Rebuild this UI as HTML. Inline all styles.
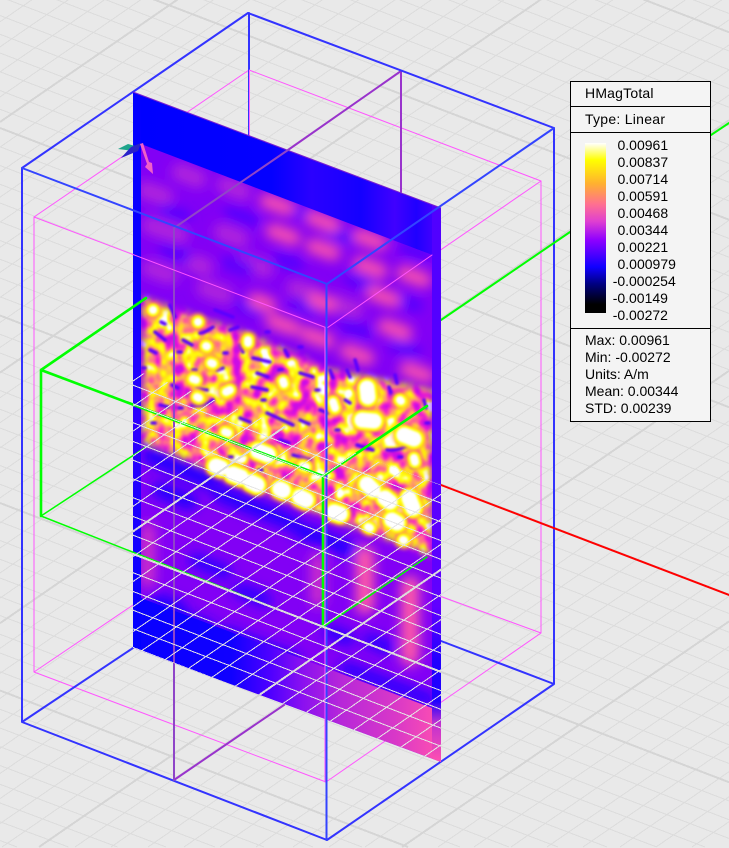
<!DOCTYPE html>
<html><head><meta charset="utf-8"><title>HMagTotal</title>
<style>
html,body{margin:0;padding:0;background:#e9e9e9;width:729px;height:848px;overflow:hidden;}
svg{display:block;overflow:hidden;}
text{font-family:"Liberation Sans",Arial,sans-serif;font-size:14px;fill:#000;}
</style></head><body>
<svg xmlns="http://www.w3.org/2000/svg" xmlns:xlink="http://www.w3.org/1999/xlink" width="729" height="848" viewBox="0 0 729 848">
<defs>
<path id="ga" d="M0 -265.75l729 279.2M0 -228.25l729 279.2M0 -209.5l729 279.2M0 -190.75l729 279.2M0 -172l729 279.2M0 -153.25l729 279.2M0 -134.5l729 279.2M0 -115.75l729 279.2M0 -97l729 279.2M0 -78.25l729 279.2M0 -40.75l729 279.2M0 -22l729 279.2M0 -3.25l729 279.2M0 15.5l729 279.2M0 34.25l729 279.2M0 53l729 279.2M0 71.75l729 279.2M0 90.5l729 279.2M0 109.25l729 279.2M0 146.75l729 279.2M0 165.5l729 279.2M0 184.25l729 279.2M0 203l729 279.2M0 221.75l729 279.2M0 240.5l729 279.2M0 259.25l729 279.2M0 278l729 279.2M0 296.75l729 279.2M0 334.25l729 279.2M0 353l729 279.2M0 371.75l729 279.2M0 390.5l729 279.2M0 409.25l729 279.2M0 428l729 279.2M0 446.75l729 279.2M0 465.5l729 279.2M0 484.25l729 279.2M0 521.75l729 279.2M0 540.5l729 279.2M0 559.25l729 279.2M0 578l705 269M0 596.75l656 250M0 615.5l607 231.5M0 634.25l558 212.75M0 653l509 194M0 671.75l460 175.25M0 709.25l362 137.75M0 728l313 119M0 746.75l264 100.25M0 765.5l215 81.5M0 784.25l166 62.75M0 803l117.5 44M0 821.75l68.5 25.25M0 840.5l17 6.5"/>
<path id="gah" d="M0 -247l729 279.2M0 -59.5l729 279.2M0 128l729 279.2M0 315.5l729 279.2M0 503l729 279.2M0 690.5l408 156.5"/>
<path id="gb" d="M0 21.8l729 -503M0 46.9l729 -503M0 71.9l729 -503M0 96.9l729 -503M0 147.1l729 -503M0 172.1l729 -503M0 197.2l729 -503M0 222.2l729 -503M0 247.3l729 -503M0 272.4l729 -503M0 297.4l729 -503M0 322.5l729 -503M0 347.5l729 -503M0 397.7l729 -503M0 422.7l729 -503M0 447.8l729 -503M0 472.8l729 -503M0 497.9l729 -503M0 522.9l729 -503M0 548l729 -503M0 573l729 -503M0 598.1l729 -503M0 648.3l729 -503M0 673.3l729 -503M0 698.4l729 -503M0 723.4l729 -503M0 748.5l729 -503M0 773.5l729 -503M0 798.6l729 -503M0 823.6l729 -503M2 847L729 345.7M75 847L729 395.9M111 847L729 420.9M148 847L729 446M184 847L729 471M220 847L729 496.1M256 847L729 521.1M293 847L729 546.2M329 847L729 571.2M365 847L729 596.3M438 847L729 646.5M474 847L729 671.5M511 847L729 696.6M547 847L729 721.6M583 847L729 746.7M620 847L729 771.7M656 847L729 796.8M692 847L729 821.8"/>
<path id="gbh" d="M0 122l729 -503M0 372.6l729 -503M0 623.2l729 -503M39 847L729 370.8M402 847L729 621.4"/>
<clipPath id="cPlane"><polygon points="133,92 441,208 441,762 133,648"/></clipPath>
<clipPath id="cInner"><polygon points="141,144 432,255 432,708 141,598"/></clipPath>
<clipPath id="cGround"><polygon points="133,369.5 441,485 441,762 133,648"/></clipPath>
<filter id="b7" filterUnits="userSpaceOnUse" x="0" y="0" width="729" height="848"><feGaussianBlur stdDeviation="6"/></filter>
<filter id="b4" filterUnits="userSpaceOnUse" x="0" y="0" width="729" height="848"><feGaussianBlur stdDeviation="4"/></filter>
<filter id="b2" filterUnits="userSpaceOnUse" x="0" y="0" width="729" height="848"><feGaussianBlur stdDeviation="1.8"/></filter>
<filter id="b1" filterUnits="userSpaceOnUse" x="0" y="0" width="729" height="848"><feGaussianBlur stdDeviation="1"/></filter>
<filter id="heat" filterUnits="userSpaceOnUse" x="130" y="280" width="320" height="290" color-interpolation-filters="sRGB">
<feTurbulence type="fractalNoise" baseFrequency="0.07 0.06" numOctaves="2" seed="11"/>
<feColorMatrix type="matrix" values="1 0 0 0 0 1 0 0 0 0 1 0 0 0 0 0 0 0 0 1"/>
<feComponentTransfer>
<feFuncR type="table" tableValues=".8 .8 .8 .8 .8 .8 .88 .95 1 1 1 1 1 1 1 1 1 1 1 1 1"/>
<feFuncG type="table" tableValues=".05 .05 .05 .05 .05 .05 .08 .15 .28 .42 .62 .78 .95 1 1 1 1 1 1 1 1"/>
<feFuncB type="table" tableValues=".9 .9 .9 .9 .9 .9 .85 .78 .68 .55 .4 .22 .02 .1 .6 1 1 1 1 1 1"/>
</feComponentTransfer>
<feGaussianBlur stdDeviation="0.8"/>
</filter>
<mask id="mHeat" maskUnits="userSpaceOnUse" x="0" y="0" width="729" height="848"><polygon points="143,298 250,335 330,370 432,390 432,556 300,506 200,466 143,442" fill="#fff" filter="url(#b4)"/></mask>
<linearGradient id="gTop" gradientUnits="userSpaceOnUse" x1="133" y1="0" x2="441" y2="0">
<stop offset="0" stop-color="#0000ff"/><stop offset=".45" stop-color="#0400ff"/><stop offset=".58" stop-color="#2a00ff"/><stop offset=".66" stop-color="#2000ff"/><stop offset=".74" stop-color="#1400ff"/><stop offset=".85" stop-color="#4000ff"/><stop offset=".92" stop-color="#2000ff"/><stop offset="1" stop-color="#5000ff"/>
</linearGradient>
<linearGradient id="gBot" gradientUnits="userSpaceOnUse" x1="133" y1="0" x2="441" y2="0">
<stop offset="0" stop-color="#0800ff"/><stop offset=".32" stop-color="#1000ff"/><stop offset=".45" stop-color="#5000ff"/><stop offset=".55" stop-color="#8a10f0"/><stop offset=".68" stop-color="#b828d8"/><stop offset=".85" stop-color="#d838c8"/><stop offset="1" stop-color="#ff50b0"/>
</linearGradient>
<linearGradient id="gCol" gradientUnits="userSpaceOnUse" x1="0" y1="92" x2="0" y2="648">
<stop offset="0" stop-color="#0000ff"/><stop offset=".4" stop-color="#1000ff"/><stop offset=".6" stop-color="#3000ff"/><stop offset=".85" stop-color="#1000ff"/><stop offset="1" stop-color="#0000ff"/>
</linearGradient>
<linearGradient id="gCol2" gradientUnits="userSpaceOnUse" x1="0" y1="208" x2="0" y2="762">
<stop offset="0" stop-color="#5000ff"/><stop offset=".5" stop-color="#5800ff"/><stop offset=".72" stop-color="#6000ff"/><stop offset=".82" stop-color="#2000ff"/><stop offset=".89" stop-color="#2000ff"/><stop offset=".93" stop-color="#c030d0"/><stop offset="1" stop-color="#ff50b0"/>
</linearGradient>
<linearGradient id="gBar" x1="0" y1="0" x2="0" y2="1">
<stop offset="0" stop-color="#ffffff"/><stop offset=".1" stop-color="#ffff00"/><stop offset=".24" stop-color="#ffb030"/><stop offset=".36" stop-color="#ff7090"/><stop offset=".46" stop-color="#e040d0"/><stop offset=".57" stop-color="#8f00ff"/><stop offset=".73" stop-color="#1000ff"/><stop offset=".83" stop-color="#000080"/><stop offset=".95" stop-color="#000000"/><stop offset="1" stop-color="#000000"/>
</linearGradient>
<path id="hotS" d="M198 322h.1M206 346l1 .4M248 340l0 3M283 381l1 3M226 392l4 -2M197 397l2 1M193 379l3 1M211 363l2 .7M333 402l2 6M400 400l1 1M303 466l3 1M403 540l1 .4M368 527l2 1M225 432l3 1M414 458l1 4M153 310h.1"/>
<path id="hotL" d="M367 388l1 9M362 420l12 1M404 435l10 4M258 451l10 4M216 466l5 2M233 474l8 3M251 482l6 3M300 497l6 3M280 489l3 1.5M334 512l6 2M367 484l6 6M409 498l4 10M385 498l5 4M392 520l5 3"/>
<path id="veins" d="M161 322l4 2M155 332q5 4 10 8M183 340l9 5M200 333q6 -1 13 -6M178 352h3M224 353h3M217 370l6 -2M193 370h3M197 387q5 3 10 3M192 405q11 2 21 -5M253 358l17 4M257 373l11 4M252 387l15 3M240 418l10 4M267 413l26 12M300 373l13 4M279 370h3M262 400h3M316 390h3M336 430h3M347 370l3 7M357 445l16 5M387 450q12 2 23 -7M389 387l2 6M426 423h3M399 457h3M412 467h3M376 487l2 3M391 493l2 4M392 510l2 3M229 457h3M259 470h3M293 455l17 5M152 423h3M179 408h3M142 368h3M215 310l18 7M266 332h3M299 347h3M172 385l6 3M160 405l8 2M240 345l3 7M285 350l3 6M320 410l8 3M345 400l5 3M300 420l9 4M150 350l6 3M170 305l5 12M230 330l8 -3M330 370l3 8M355 360l3 10M395 375l2 8M424 400l2 8M280 440l9 3"/>
</defs>

<rect width="729" height="848" fill="#e9e9e9"/>
<g fill="none" shape-rendering="crispEdges">
<use xlink:href="#ga" stroke="#dcdcdc" stroke-width="1"/>
<use xlink:href="#gb" stroke="#dcdcdc" stroke-width="1"/>
<use xlink:href="#gah" stroke="#d5d5d5" stroke-width="2"/>
<use xlink:href="#gbh" stroke="#d5d5d5" stroke-width="2"/>
</g>

<!-- back geometry -->
<g fill="none" stroke-linecap="round" stroke-linejoin="round">
<path d="M34 217L249 70L541 181M34 672L133 605M541 633L441 596.5M34 217V672M541 181V633M34 672L326 782L541 633M541 181L327 328" stroke="#ff55ff" stroke-width="1"/>
<path d="M249 13V137" stroke="#3333ff" stroke-width="2"/>
<path d="M249.5 70V137" stroke="#ff66ff" stroke-width="1"/>
<path d="M401 71V192M401 71L288 150M174 780L284 705" stroke="#9933cc" stroke-width="2"/>
<path d="M248 13L22 168M248 13L554 128L554 684M22 168V722L327 840L554 684M22 722L133 648M554 684L441 641" stroke="#3333ff" stroke-width="2"/>
<path d="M441 485L729 595" stroke="#ff0000" stroke-width="2"/>
<path d="M441 320L570 232M711 135L729 123" stroke="#00ff00" stroke-width="2"/>
</g>

<!-- field plane -->
<g clip-path="url(#cPlane)">
<rect x="133" y="92" width="308" height="670" fill="#7000ff"/>
<polygon points="133,92 441,208 441,258 133,148" fill="url(#gTop)"/>
<polygon points="133,592 441,708 441,762 133,648" fill="url(#gBot)"/>
<g clip-path="url(#cInner)">
<rect x="141" y="144" width="291" height="564" fill="#8200f5"/>
<!-- upper field -->
<g filter="url(#b7)" fill="none" stroke-linecap="round">
<path stroke="#b028dc" stroke-width="17" d="M145 190l20 7M180 172l18 7M225 185l18 7M160 228l20 7M222 232l18 7M150 268l20 7M205 288l20 7M245 262l20 7M295 288l20 7M335 303l20 7M150 225l10 4M190 262l15 5"/>
<path stroke="#5000ff" stroke-width="12" d="M165 210l20 7M230 212l24 9M278 258l20 7M300 212l18 7M330 232l20 7M228 262l20 7M350 278l22 8M395 298l22 8M405 248l20 7M295 303l20 7M345 325l22 8M395 345l20 7M165 250l20 7M240 305l16 6"/>
<path stroke="#f850b0" stroke-width="15" d="M267 201l20 7M313 218l20 7M360 236l20 7M273 231l20 7M313 246l20 7M360 264l20 7M404 273l20 7M373 293l20 7M273 321l20 7M307 334l20 7M347 351l20 7M407 369l20 7M385 326l20 7M255 300l14 5M315 300l14 5"/>
<!-- lower field -->
<path stroke="#2000ff" stroke-width="16" d="M150 456l60 26M220 494l70 28M300 530l60 24M160 490l30 12"/>
<path stroke="#2a00ff" stroke-width="14" d="M370 640l18 8M330 632l18 7M195 560l30 12M160 600l20 8M240 590l25 10"/>
<path stroke="#d030c8" stroke-width="14" d="M148 530l0 50M318 560l0 40"/>
<path stroke="#ff58a8" stroke-width="18" d="M365 555l0 50M410 585l0 72"/>
<path stroke="#2400ff" stroke-width="12" d="M150 604l60 23M225 632l70 27M345 668l85 32"/>
</g>
<!-- hot band -->
<g mask="url(#mHeat)"><rect x="130" y="280" width="310" height="290" filter="url(#heat)"/></g>
<g fill="none" stroke-linecap="round">
<use xlink:href="#veins" stroke="#5a00ff" stroke-width="3.6" filter="url(#b1)"/>
<use xlink:href="#hotS" stroke="#ffa040" stroke-width="18" filter="url(#b2)" opacity=".75"/>
<use xlink:href="#hotL" stroke="#ffa040" stroke-width="24" filter="url(#b2)" opacity=".75"/>
<use xlink:href="#hotS" stroke="#ffff00" stroke-width="13" filter="url(#b1)"/>
<use xlink:href="#hotL" stroke="#ffff00" stroke-width="20" filter="url(#b1)"/>
<use xlink:href="#hotS" stroke="#ffffff" stroke-width="8" filter="url(#b1)"/>
<use xlink:href="#hotL" stroke="#ffffff" stroke-width="15" filter="url(#b1)"/>
</g>
</g>
<rect x="133" y="92" width="8" height="556" fill="url(#gCol)"/>
<rect x="432" y="204" width="9" height="558" fill="url(#gCol2)"/>
</g>
<path d="M133 92L441 208" stroke="#7a20d0" stroke-width="1" fill="none"/>

<!-- lines in front of the plane -->
<g fill="none" stroke-linecap="round" stroke-linejoin="round">
<path d="M288 150L174 228V780" stroke="#8f45c8" stroke-width="2"/>
<path d="M34 217L327 328L432 255" stroke="#ff55ff" stroke-width="1"/>
<path d="M325 328V782" stroke="#ff55ff" stroke-width="1"/>
<path d="M22 168L327 284L554 128M326.5 284V840" stroke="#3344ff" stroke-width="2"/>
<path d="M146 298L41 370L323 476L427 406M41 370V516M323 476V627" stroke="#00ff00" stroke-width="2.6"/>
<path d="M41 516L323 627L427 557M41 516L146 447" stroke="#00ff00" stroke-width="1.5"/>
</g>

<!-- ground grid in front of the plane -->
<g clip-path="url(#cGround)" fill="none" shape-rendering="crispEdges">
<use xlink:href="#ga" stroke="#e4e4e4" stroke-width="1"/>
<use xlink:href="#gb" stroke="#e4e4e4" stroke-width="1"/>
<use xlink:href="#gah" stroke="#dcdcdc" stroke-width="2"/>
<use xlink:href="#gbh" stroke="#dcdcdc" stroke-width="2"/>
</g>

<!-- triad -->
<polygon points="118,149 128,144 135,146 141,144 134,151" fill="#1fa58c"/>
<polygon points="121,158 131,147 141,143 138,151" fill="#2a22c8"/>
<polygon points="140,144 143,143 149,162 152,163 153,174 145,167 147,164" fill="#f060c8"/>

<!-- legend -->
<rect x="570.5" y="81.5" width="140" height="340" fill="#f4f4f4" stroke="#000" stroke-width="1"/>
<path d="M570 106.5H711M570 132.5H711M570 328.5H711" stroke="#000" stroke-width="1" fill="none"/>
<rect x="585" y="143" width="21" height="170" fill="url(#gBar)"/>
<text x="585" y="98" textLength="68.5" lengthAdjust="spacing">HMagTotal</text>
<text x="585" y="124" textLength="80" lengthAdjust="spacing">Type: Linear</text>
<text x="617.5" y="150">0.00961</text>
<text x="617.5" y="167">0.00837</text>
<text x="617.5" y="184">0.00714</text>
<text x="617.5" y="201">0.00591</text>
<text x="617.5" y="218">0.00468</text>
<text x="617.5" y="235">0.00344</text>
<text x="617.5" y="252">0.00221</text>
<text x="617.5" y="269">0.000979</text>
<text x="612.7" y="286">-0.000254</text>
<text x="612.7" y="303">-0.00149</text>
<text x="612.7" y="320">-0.00272</text>
<text x="585" y="345">Max: 0.00961</text>
<text x="585" y="362">Min: -0.00272</text>
<text x="585" y="379">Units: A/m</text>
<text x="585" y="396">Mean: 0.00344</text>
<text x="585" y="413">STD: 0.00239</text>
</svg>
</body></html>
